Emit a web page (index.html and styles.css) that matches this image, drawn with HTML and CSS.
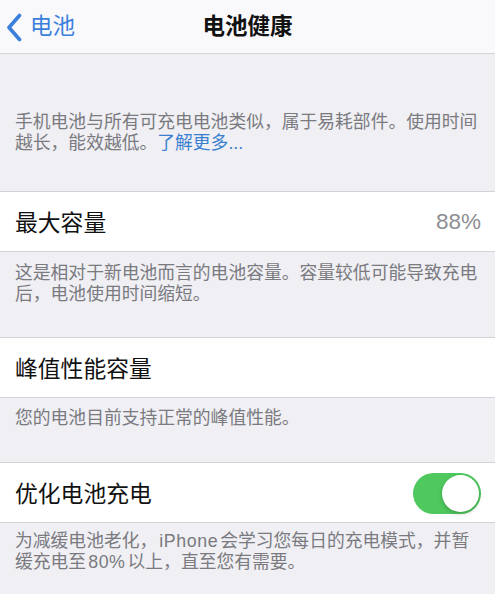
FILE: index.html
```html
<!DOCTYPE html>
<html lang="zh-CN">
<head>
    <meta charset="UTF-8">
    <meta name="viewport" content="width=device-width, initial-scale=1.0">
    <title>电池健康</title>
    <link rel="stylesheet" href="styles.css">
</head>
<body>
    <div class="nav-bar">
        <a class="back" href="#">
            <svg class="chevron" width="16" height="29" viewBox="0 0 16 29">
                <path d="M13.5 2.5 L3 14.5 L13.5 26.5" fill="none" stroke="#3a7fdc" stroke-width="3.6" stroke-linecap="round" stroke-linejoin="round"/>
            </svg>
            <span>电池</span>
        </a>
        <h1 class="title">电池健康</h1>
        <div></div>
    </div>

    <p class="intro">手机电池与所有可充电电池类似，属于易耗部件。使用时间越长，能效越低。<a class="link" href="#">了解更多...</a></p>

    <div class="cell">
        <span class="cell-label">最大容量</span>
        <span class="cell-value">88%</span>
    </div>
    <p class="footer footer-first">这是相对于新电池而言的电池容量。容量较低可能导致充电后，电池使用时间缩短。</p>

    <div class="cell">
        <span class="cell-label">峰值性能容量</span>
    </div>
    <p class="footer footer-second">您的电池目前支持正常的峰值性能。</p>

    <div class="cell">
        <span class="cell-label">优化电池充电</span>
        <div class="switch">
            <div class="knob"></div>
        </div>
    </div>
    <p class="footer footer-last">为减缓电池老化，<span class="latin">iPhone</span>会学习您每日的充电模式，并暂缓充电至<span class="latin">80%</span>以上，直至您有需要。</p>
</body>
</html>
```

FILE: styles.css
```css
body {
    margin: 0;
    background-color: #efeff4;
    font-family: "Liberation Sans", "Noto Sans CJK SC", sans-serif;
    color: #111;
}

.nav-bar {
    height: 53px;
    display: grid;
    grid-template-columns: 1fr auto 1fr;
    align-items: center;
    background-color: #f9f9fb;
    border-bottom: 1px solid #d3d3d8;
}

.back {
    display: flex;
    align-items: center;
    gap: 8px;
    padding-left: 6px;
    color: #3a7fdc;
    text-decoration: none;
    font-size: 22.5px;
    line-height: 28px;
}

.chevron {
    display: block;
    margin-top: 1px;
}

.title {
    margin: 0;
    font-size: 22.5px;
    font-weight: 600;
    line-height: 28px;
}

.intro,
.footer {
    margin: 0;
    padding-left: 15px;
    padding-right: 15px;
    font-size: 17.8px;
    line-height: 21px;
    color: #7a7a7f;
}

.intro {
    padding-top: 58px;
    padding-bottom: 37px;
}

.link {
    color: #3a7fd0;
    text-decoration: none;
}

.latin {
    letter-spacing: 0.6px;
    margin: 0 2px;
}

.cell {
    height: 59px;
    display: flex;
    align-items: center;
    justify-content: space-between;
    padding: 0 14px 0 15px;
    background-color: #fff;
    border-top: 1px solid #d3d3d8;
    border-bottom: 1px solid #d3d3d8;
}

.cell-label {
    font-size: 22.8px;
    line-height: 28px;
    padding-top: 3px;
}

.cell-value {
    font-size: 22.5px;
    line-height: 28px;
    color: #8e8e93;
    padding-top: 1px;
}

.footer-first {
    padding-top: 11px;
    padding-bottom: 32px;
}

.footer-second {
    padding-top: 10px;
    padding-bottom: 33px;
}

.footer-last {
    padding-top: 8px;
    padding-bottom: 20px;
}

.switch {
    position: relative;
    width: 68px;
    height: 41px;
    border-radius: 21px;
    background-color: #4fc85d;
    margin-top: 1px;
}

.knob {
    position: absolute;
    top: 2px;
    right: 2px;
    width: 37px;
    height: 37px;
    border-radius: 50%;
    background-color: #fff;
    box-shadow: 0 2px 4px rgba(0, 0, 0, 0.2);
}
```
